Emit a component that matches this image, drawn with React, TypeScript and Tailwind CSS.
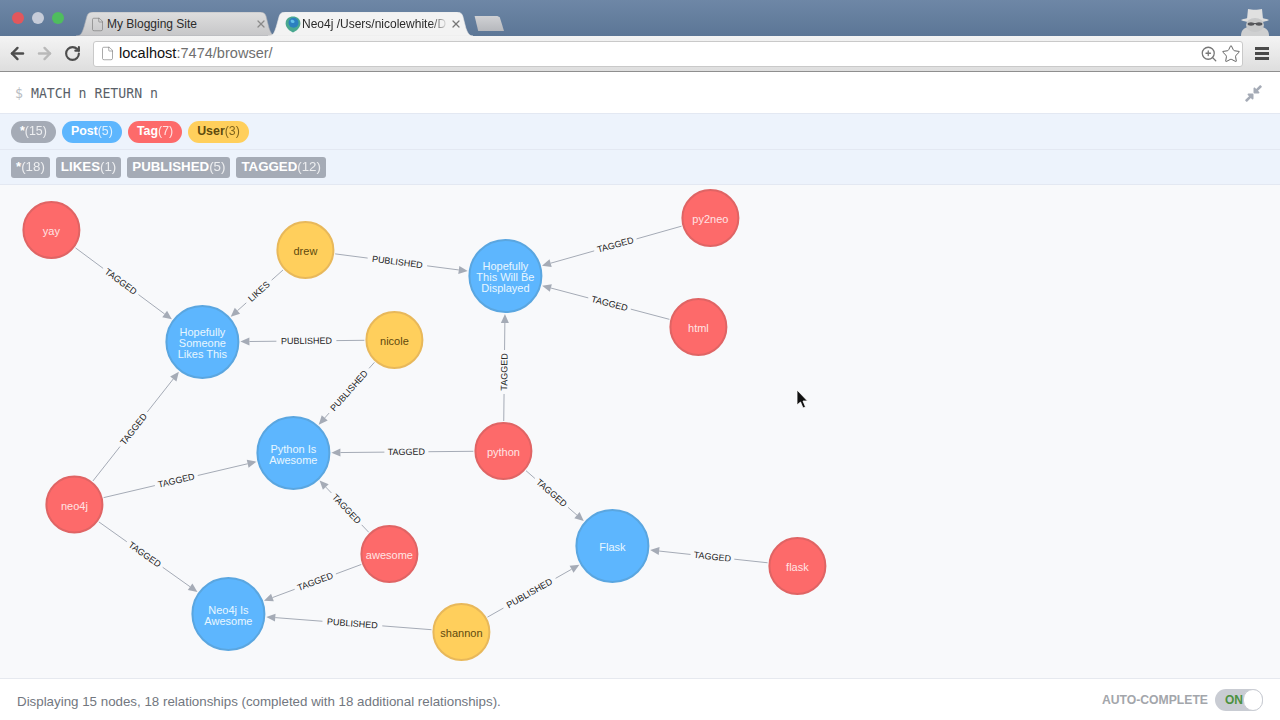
import { ArrowLeft, ArrowRight, File, RotateCw, Star, X, ZoomIn } from 'lucide-react'
import { FaCompressAlt } from 'react-icons/fa'

const nodeStyles = {
  post: { fill: '#5db6fe', stroke: '#5aa6e0', text: '#e8f6ff' },
  tag: { fill: '#fd6a6a', stroke: '#e06464', text: '#ffe4e4' },
  user: { fill: '#ffcf5c', stroke: '#e8b85a', text: '#604a0e' },
}

type NodeKind = keyof typeof nodeStyles

const nodes: Record<string, { x: number; y: number; kind: NodeKind; lines: string[] }> = {
  yay: { x: 51, y: 229, kind: 'tag', lines: ['yay'] },
  drew: { x: 305, y: 249, kind: 'user', lines: ['drew'] },
  nicole: { x: 394, y: 339, kind: 'user', lines: ['nicole'] },
  shannon: { x: 461, y: 631, kind: 'user', lines: ['shannon'] },
  py2neo: { x: 710, y: 217, kind: 'tag', lines: ['py2neo'] },
  html: { x: 698, y: 326, kind: 'tag', lines: ['html'] },
  python: { x: 503, y: 450, kind: 'tag', lines: ['python'] },
  neo4j: { x: 74, y: 503.5, kind: 'tag', lines: ['neo4j'] },
  awesome: { x: 389, y: 553, kind: 'tag', lines: ['awesome'] },
  flask: { x: 797, y: 565, kind: 'tag', lines: ['flask'] },
  likes: { x: 202, y: 341, kind: 'post', lines: ['Hopefully', 'Someone', 'Likes This'] },
  displayed: { x: 505, y: 275, kind: 'post', lines: ['Hopefully', 'This Will Be', 'Displayed'] },
  pythonPost: { x: 293, y: 452, kind: 'post', lines: ['Python Is', 'Awesome'] },
  neo4jPost: { x: 228, y: 613, kind: 'post', lines: ['Neo4j Is', 'Awesome'] },
  flaskPost: { x: 612, y: 545, kind: 'post', lines: ['Flask'] },
}

const edges: { from: string; to: string; label: string; at: [number, number] }[] = [
  { from: 'yay', to: 'likes', label: 'TAGGED', at: [120, 281] },
  { from: 'drew', to: 'likes', label: 'LIKES', at: [259, 291] },
  { from: 'drew', to: 'displayed', label: 'PUBLISHED', at: [397, 261] },
  { from: 'nicole', to: 'likes', label: 'PUBLISHED', at: [306, 340] },
  { from: 'nicole', to: 'pythonPost', label: 'PUBLISHED', at: [349, 390] },
  { from: 'py2neo', to: 'displayed', label: 'TAGGED', at: [615, 244] },
  { from: 'html', to: 'displayed', label: 'TAGGED', at: [609, 303] },
  { from: 'python', to: 'displayed', label: 'TAGGED', at: [504, 371] },
  { from: 'python', to: 'pythonPost', label: 'TAGGED', at: [406, 451] },
  { from: 'python', to: 'flaskPost', label: 'TAGGED', at: [551, 492] },
  { from: 'neo4j', to: 'likes', label: 'TAGGED', at: [133, 428] },
  { from: 'neo4j', to: 'pythonPost', label: 'TAGGED', at: [176, 480] },
  { from: 'neo4j', to: 'neo4jPost', label: 'TAGGED', at: [144, 554] },
  { from: 'awesome', to: 'pythonPost', label: 'TAGGED', at: [346, 508] },
  { from: 'awesome', to: 'neo4jPost', label: 'TAGGED', at: [315, 581] },
  { from: 'shannon', to: 'neo4jPost', label: 'PUBLISHED', at: [352, 622] },
  { from: 'shannon', to: 'flaskPost', label: 'PUBLISHED', at: [529, 592] },
  { from: 'flask', to: 'flaskPost', label: 'TAGGED', at: [712, 556] },
]

const labelWidths: Record<string, number> = { TAGGED: 34, PUBLISHED: 50, LIKES: 24 }

function radius(id: string) {
  return nodes[id].kind === 'post' ? 36 : 28
}

function Edge({ from, to, label, at }: (typeof edges)[number]) {
  const a = nodes[from]
  const b = nodes[to]
  const len = Math.hypot(b.x - a.x, b.y - a.y)
  const ux = (b.x - a.x) / len
  const uy = (b.y - a.y) / len
  const along = (at[0] - a.x) * ux + (at[1] - a.y) * uy
  const gap = labelWidths[label] / 2 + 5
  const startD = radius(from) + 2
  const endD = len - radius(to) - 2
  const pt = (d: number) => [a.x + ux * d, a.y + uy * d]
  const [x1, y1] = pt(startD)
  const [x2, y2] = pt(along - gap)
  const [x3, y3] = pt(along + gap)
  const [x4, y4] = pt(endD - 9)
  const [tx, ty] = pt(endD)
  const [lx, ly] = pt(along)
  let angle = (Math.atan2(uy, ux) * 180) / Math.PI
  if (angle > 90) angle -= 180
  if (angle < -90) angle += 180
  const arrow = `${tx},${ty} ${x4 - uy * 4},${y4 + ux * 4} ${x4 + uy * 4},${y4 - ux * 4}`

  return (
    <g>
      <line x1={x1} y1={y1} x2={x2} y2={y2} stroke="#a5abb6" strokeWidth={1} />
      <line x1={x3} y1={y3} x2={x4} y2={y4} stroke="#a5abb6" strokeWidth={1} />
      <polygon points={arrow} fill="#a5abb6" />
      <text
        x={0}
        y={3}
        transform={`translate(${lx} ${ly}) rotate(${angle})`}
        textAnchor="middle"
        fontSize={9}
        fill="#222222"
      >
        {label}
      </text>
    </g>
  )
}

function GraphNode({ id }: { id: string }) {
  const n = nodes[id]
  const s = nodeStyles[n.kind]
  const r = radius(id)
  const top = n.y - ((n.lines.length - 1) * 11) / 2 + 5
  return (
    <g>
      <circle cx={n.x} cy={n.y} r={r} fill={s.fill} stroke={s.stroke} strokeWidth={2} />
      {n.lines.map((line, i) => (
        <text key={line} x={n.x} y={top + i * 11} textAnchor="middle" fontSize={11} fill={s.text}>
          {line}
        </text>
      ))}
    </g>
  )
}

function TabShape({ active }: { active?: boolean }) {
  return (
    <svg className="absolute inset-0 h-full w-full" viewBox="0 0 200 24" preserveAspectRatio="none">
      <defs>
        <linearGradient id="tabIdle" x1="0" y1="0" x2="0" y2="1">
          <stop offset="0" stopColor="#dedede" />
          <stop offset="1" stopColor="#c6c6c8" />
        </linearGradient>
      </defs>
      <path
        d="M0 24 C5 24 6 21 8 15 L11 4 C12 1 14 0 17 0 L183 0 C187 0 189 1 190 4 L193 16 C195 22 197 24 200 24 Z"
        fill={active ? '#f3f3f3' : 'url(#tabIdle)'}
        stroke={active ? '#e8e8e8' : '#a9adb3'}
        strokeWidth={0.6}
      />
    </svg>
  )
}

function NeoFavicon() {
  return (
    <svg width="16" height="17" viewBox="0 0 14 15" className="shrink-0">
      <path d="M7 0.5 C10.5 0.5 13.5 2.5 13.5 6.5 C13.5 10.5 10 13.5 7 14.5 C4 13.5 0.5 10.5 0.5 6.5 C0.5 2.5 3.5 0.5 7 0.5 Z" fill="#4aa890" />
      <circle cx="7.5" cy="6" r="4.4" fill="#2c7fc0" />
      <path d="M5 3.6 C6.5 3 8 3.6 8.4 5 C8 6.6 6 6.6 5 5.4 Z" fill="#63bfe8" />
    </svg>
  )
}

function Incognito() {
  return (
    <svg width="34" height="30" viewBox="0 6 34 30">
      <path d="M3 36 C3 30 6 28 10 27 L24 27 C28 28 31 30 31 36 Z" fill="#cfd0d1" />
      <path d="M3 20 C8 17 26 17 31 20 C27 23 7 23 3 20 Z" fill="#dcdcdc" />
      <path d="M9 19 L10 9 C14 10 20 10 24 9 L25 19 Z" fill="#e0e0e0" />
      <ellipse cx="17" cy="25" rx="9" ry="7" fill="#c8c9ca" />
      <ellipse cx="13" cy="24" rx="3.4" ry="1.7" fill="#55565a" />
      <ellipse cx="21" cy="24" rx="3.4" ry="1.7" fill="#55565a" />
      <rect x="13" y="23" width="8" height="1" fill="#55565a" />
    </svg>
  )
}

function Cursor() {
  return (
    <svg className="absolute left-[795px] top-[389px]" width="14" height="22" viewBox="0 0 14 22">
      <path d="M2 1 L2 16 L5.5 13 L8 19 L10.5 18 L8 12 L12.5 12 Z" fill="#111111" stroke="#ffffff" strokeWidth={0.8} />
    </svg>
  )
}

function Pill({ name, count, className }: { name: string; count: string; className: string }) {
  return (
    <span className={`flex h-[22px] items-center rounded-full px-[9px] text-[12.4px] ${className}`}>
      <b className="font-bold">{name}</b>
      <span className="opacity-80">{count}</span>
    </span>
  )
}

function RelTag({ name, count }: { name: string; count: string }) {
  return (
    <span className="flex h-[21px] items-center rounded-[3px] bg-[#a5abb6] px-[5px] text-[13.3px] text-white">
      <b className="font-bold">{name}</b>
      <span className="opacity-80">{count}</span>
    </span>
  )
}

export default function App() {
  return (
    <div className="relative flex h-screen w-full flex-col overflow-hidden bg-white font-['Liberation_Sans',sans-serif]">
      <div className="flex h-[36px] shrink-0 items-end bg-gradient-to-b from-[#6e87a6] to-[#5c7696] pr-[8px]">
        <div className="mb-[12px] ml-[12px] mr-[12px] flex gap-[8px]">
          <span className="h-[12px] w-[12px] shrink-0 rounded-full bg-[#e2575c]" />
          <span className="h-[12px] w-[12px] shrink-0 rounded-full bg-[#c6ccd9]" />
          <span className="h-[12px] w-[12px] shrink-0 rounded-full bg-[#4fbd5e]" />
        </div>
        <div className="flex items-end">
          <div className="relative flex h-[24px] w-[200px] items-center pl-[14px] pr-[9px] text-[12px] text-[#2b2b2b]">
            <TabShape />
            <File size={15} strokeWidth={1} className="relative mr-[2px] shrink-0 text-[#777]" />
            <span className="relative flex-1 truncate">My Blogging Site</span>
            <X size={12} strokeWidth={2.5} className="relative text-[#8a8a8a]" />
          </div>
          <div className="relative -ml-[8px] flex h-[24px] w-[205px] items-center pl-[17px] pr-[11px] text-[12px] text-[#2b2b2b]">
            <TabShape active />
            <span className="relative mr-[1px] flex"><NeoFavicon /></span>
            <span className="relative flex-1 overflow-hidden whitespace-nowrap [mask-image:linear-gradient(to_right,#000_88%,transparent)]">
              Neo4j /Users/nicolewhite/D
            </span>
            <X size={12} strokeWidth={2.5} className="relative ml-[2px] text-[#777]" />
          </div>
          <div className="mb-[5px] ml-[1px] h-[15px] w-[30px] bg-gradient-to-b from-[#d0d1d4] to-[#b6b8bd] [clip-path:polygon(2%_0,78%_0,86%_8%,100%_100%,14%_100%)]" />
        </div>
        <div className="ml-auto">
          <Incognito />
        </div>
      </div>

      <div className="flex h-[36px] shrink-0 items-center border-b border-b-[#8f8f8f] bg-gradient-to-b from-[#f4f4f4] to-[#dedede] pl-[8px] pr-[11px]">
        <ArrowLeft size={19} strokeWidth={3} className="text-[#4d4d4d]" />
        <ArrowRight size={19} strokeWidth={3} className="ml-[8px] text-[#b9b9b9]" />
        <RotateCw size={17} strokeWidth={3} className="ml-[10px] text-[#4d4d4d]" />
        <div className="ml-[12px] flex h-[26px] flex-1 items-center rounded-[3px] border border-[#c9c9c9] bg-white pl-[6px] pr-[1px]">
          <File size={15} strokeWidth={1} className="text-[#777]" />
          <span className="ml-[4px] mt-[1px] text-[14.55px] text-[#111]">localhost</span>
          <span className="mt-[1px] text-[14.55px] text-[#6f6f6f]">:7474/browser/</span>
          <ZoomIn size={18} strokeWidth={1.7} className="ml-auto text-[#777]" />
          <Star size={20} strokeWidth={1.2} className="ml-[3px] text-[#666]" />
        </div>
        <div className="ml-[12px] flex w-[14px] flex-col gap-[2px]">
          <span className="h-[3px] bg-[#4a4a4a]" />
          <span className="h-[3px] bg-[#4a4a4a]" />
          <span className="h-[3px] bg-[#4a4a4a]" />
        </div>
      </div>

      <div className="flex h-[42px] shrink-0 items-center justify-between border-b border-b-[#e3e8f2] pl-[15px] pr-[17px] pt-[2px] font-['DejaVu_Sans_Mono',monospace] text-[13.2px] text-[#5a5f68]">
        <div>
          <span className="mr-[8px] text-[#b8bcc2]">$</span>MATCH n RETURN n
        </div>
        <FaCompressAlt size={19} className="text-[#a5abb6]" />
      </div>

      <div className="flex h-[36px] shrink-0 items-center gap-[6px] border-b border-b-[#e3e8f2] bg-[#edf3fc] pl-[11px]">
        <Pill name="*" count="(15)" className="bg-[#a5abb6] text-white" />
        <Pill name="Post" count="(5)" className="bg-[#5db6fe] text-white" />
        <Pill name="Tag" count="(7)" className="bg-[#fd6a6a] text-white" />
        <Pill name="User" count="(3)" className="bg-[#ffcf5c] text-[#604a0e]" />
      </div>

      <div className="flex h-[35px] shrink-0 items-center gap-[6px] border-b border-b-[#e3e8f2] bg-[#edf3fc] pl-[11px]">
        <RelTag name="*" count="(18)" />
        <RelTag name="LIKES" count="(1)" />
        <RelTag name="PUBLISHED" count="(5)" />
        <RelTag name="TAGGED" count="(12)" />
      </div>

      <div className="min-h-0 flex-1 bg-[#f8f9fb]">
        <svg className="h-full w-full" viewBox="-0.4 184 1280 493">
          {edges.map(e => (
            <Edge key={`${e.from}-${e.to}`} {...e} />
          ))}
          {Object.keys(nodes).map(id => (
            <GraphNode key={id} id={id} />
          ))}
        </svg>
      </div>

      <div className="flex h-[42px] shrink-0 items-center justify-between border-t border-t-[#e6e9ef] px-[17px] text-[13.33px] text-[#727780]">
        <span className="mt-[5px]">Displaying 15 nodes, 18 relationships (completed with 18 additional relationships).</span>
        <div className="flex items-center gap-[7px]">
          <span className="mt-[2px] text-[12.2px] font-bold text-[#a3a6ab]">AUTO-COMPLETE</span>
          <div className="flex h-[22px] w-[48px] items-center justify-between rounded-full bg-[#c9ccd3] pl-[10px]">
            <span className="text-[12px] font-bold text-[#4d9140]">ON</span>
            <span className="h-[22px] w-[22px] rounded-full border border-[#c9ccd3] bg-white" />
          </div>
        </div>
      </div>

      <Cursor />
    </div>
  )
}
